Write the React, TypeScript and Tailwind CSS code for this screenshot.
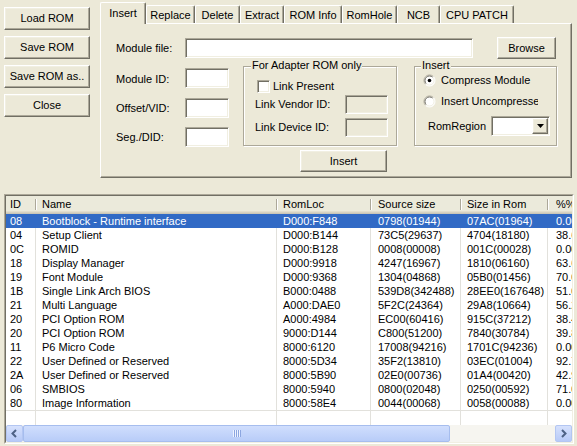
import React from "react";

const raised =
  "border border-t-white border-l-white border-r-[#716f64] border-b-[#716f64] shadow-[inset_-1px_-1px_0_#aca899,inset_1px_1px_0_#f1efe2]";
const sunken =
  "border border-t-[#aca899] border-l-[#aca899] border-r-white border-b-white shadow-[inset_1px_1px_0_#716f64,inset_-1px_-1px_0_#f1efe2]";
const etched =
  "border border-[#aca899] shadow-[inset_1px_1px_0_#ffffff,1px_1px_0_#ffffff]";

function Btn({ children, className = "" }: { children: React.ReactNode; className?: string }) {
  return (
    <div className={`${raised} bg-[#ece9d8] flex items-center justify-center whitespace-nowrap ${className}`}>
      {children}
    </div>
  );
}

function Radio({ checked }: { checked?: boolean }) {
  return (
    <svg width="13" height="13" viewBox="0 0 13 13" className="shrink-0">
      <circle cx="6.5" cy="6.5" r="5.5" fill="#ffffff" />
      <path d="M2.6 10.4 A5.5 5.5 0 0 1 10.4 2.6" stroke="#aca899" strokeWidth="1" fill="none" />
      <path d="M10.4 2.6 A5.5 5.5 0 0 1 2.6 10.4" stroke="#ffffff" strokeWidth="1" fill="none" />
      <path d="M3.3 9.7 A4.5 4.5 0 0 1 9.7 3.3" stroke="#716f64" strokeWidth="1" fill="none" />
      <path d="M9.7 3.3 A4.5 4.5 0 0 1 3.3 9.7" stroke="#f1efe2" strokeWidth="1" fill="none" />
      {checked && <circle cx="6.5" cy="6.5" r="1.8" fill="#000000" />}
    </svg>
  );
}

const tabs: [string, number][] = [
  ["Insert", 46],
  ["Replace", 49],
  ["Delete", 45],
  ["Extract", 44],
  ["ROM Info", 58],
  ["RomHole", 55],
  ["NCB", 43],
  ["CPU PATCH", 74],
];

const rows: string[][] = [
  ["08", "Bootblock - Runtime interface", "D000:F848", "0798(01944)", "07AC(01964)", "0.00"],
  ["04", "Setup Client", "D000:B144", "73C5(29637)", "4704(18180)", "38.66"],
  ["0C", "ROMID", "D000:B128", "0008(00008)", "001C(00028)", "0.00"],
  ["18", "Display Manager", "D000:9918", "4247(16967)", "1810(06160)", "63.69"],
  ["19", "Font Module", "D000:9368", "1304(04868)", "05B0(01456)", "70.09"],
  ["1B", "Single Link Arch BIOS", "B000:0488", "539D8(342488)", "28EE0(167648)", "51.05"],
  ["21", "Multi Language", "A000:DAE0", "5F2C(24364)", "29A8(10664)", "56.23"],
  ["20", "PCI Option ROM", "A000:4984", "EC00(60416)", "915C(37212)", "38.41"],
  ["20", "PCI Option ROM", "9000:D144", "C800(51200)", "7840(30784)", "39.88"],
  ["11", "P6 Micro Code", "8000:6120", "17008(94216)", "1701C(94236)", "0.00"],
  ["22", "User Defined or Reserved", "8000:5D34", "35F2(13810)", "03EC(01004)", "92.73"],
  ["2A", "User Defined or Reserved", "8000:5B90", "02E0(00736)", "01A4(00420)", "42.93"],
  ["06", "SMBIOS", "8000:5940", "0800(02048)", "0250(00592)", "71.09"],
  ["80", "Image Information", "8000:58E4", "0044(00068)", "0058(00088)", "0.00"],
];

const headers = ["ID", "Name", "RomLoc", "Source size", "Size in Rom", "%%"];
const cols = "grid grid-cols-[30px_241px_94px_90px_87px_80px]";
const pads = ["pl-[4px]", "pl-[6px]", "pl-[6px]", "pl-[7px]", "pl-[6px]", "pl-[8px]"];

function Chevron({ dir }: { dir: "l" | "r" }) {
  return (
    <svg width="9" height="9" viewBox="0 0 9 9">
      <path
        d={dir === "l" ? "M6 1 L2.5 4.5 L6 8" : "M3 1 L6.5 4.5 L3 8"}
        stroke="#4d6185"
        strokeWidth="2"
        fill="none"
      />
    </svg>
  );
}

export default function App() {
  return (
    <div className="w-[577px] h-[446px] bg-[#ece9d8] overflow-hidden font-['Liberation_Sans',Arial,sans-serif] text-[11px] leading-[13px] text-black">
      <div className="flex h-[194px]">
        {/* left buttons */}
        <div className="w-[100px] pl-[4px] pt-[7px] flex flex-col gap-[6px]">
          <Btn className="w-[86px] h-[23px]">Load ROM</Btn>
          <Btn className="w-[86px] h-[23px]">Save ROM</Btn>
          <Btn className="w-[86px] h-[23px]">Save ROM as..</Btn>
          <Btn className="w-[86px] h-[23px]">Close</Btn>
        </div>

        {/* tab control */}
        <div className="pt-[2px] flex flex-col">
          <div className="flex items-end h-[22px] -mb-px relative z-10">
            {tabs.map(([t, w], i) =>
              i === 0 ? (
                <div
                  key={t}
                  style={{ width: w }}
                  className="h-[22px] bg-[#ece9d8] border-l border-t border-l-white border-t-white border-r border-r-[#716f64] shadow-[inset_-1px_0_0_#aca899] rounded-t-[2px] flex items-start justify-center pt-[4px]"
                >
                  {t}
                </div>
              ) : (
                <div
                  key={t}
                  style={{ width: w }}
                  className="h-[18px] mb-px border-l border-t border-l-white border-t-white border-r border-r-[#716f64] shadow-[inset_-1px_0_0_#aca899] rounded-t-[2px] flex items-center justify-center pt-[2px]"
                >
                  {t}
                </div>
              )
            )}
          </div>
          <div className="w-[472px] h-[155px] border border-t-white border-l-white border-r-[#716f64] border-b-[#716f64] shadow-[inset_-1px_-1px_0_#aca899] pl-[15px] pt-[13px]">
            <div className="flex items-center h-[22px]">
              <div className="w-[69px]">Module file:</div>
              <div className={`${sunken} bg-white w-[288px] h-[20px]`} />
              <Btn className="ml-[24px] w-[59px] h-[22px]">Browse</Btn>
            </div>
            <div className="flex items-start">
              <div className="flex flex-col w-[113px]">
                <div className="flex items-center h-[20px] mt-[9px]">
                  <div className="w-[69px] pt-[3px]">Module ID:</div>
                  <div className={`${sunken} bg-white w-[44px] h-[20px]`} />
                </div>
                <div className="flex items-center h-[20px] mt-[10px]">
                  <div className="w-[69px] pt-[1px]">Offset/VID:</div>
                  <div className={`${sunken} bg-white w-[44px] h-[20px]`} />
                </div>
                <div className="flex items-center h-[20px] mt-[9px]">
                  <div className="w-[69px]">Seg./DID:</div>
                  <div className={`${sunken} bg-white w-[44px] h-[20px]`} />
                </div>
              </div>

              <div className={`${etched} relative ml-[14px] mt-[7px] w-[154px] h-[80px] pl-[11px] pt-[13px]`}>
                <span className="absolute left-[7px] -top-[8px] bg-[#ece9d8] px-[1px] whitespace-nowrap">
                  For Adapter ROM only
                </span>
                <div className="flex items-center h-[13px]">
                  <span className={`${sunken} bg-white w-[13px] h-[13px] ml-[2px]`} />
                  <span className="ml-[3px]">Link Present</span>
                </div>
                <div className="flex items-center h-[19px] mt-[2px]">
                  <div className="w-[90px]">Link Vendor ID:</div>
                  <div className={`${sunken} w-[43px] h-[19px]`} />
                </div>
                <div className="flex items-center h-[19px] mt-[4px]">
                  <div className="w-[90px]">Link Device ID:</div>
                  <div className={`${sunken} w-[43px] h-[19px]`} />
                </div>
              </div>

              <div className={`${etched} relative ml-[17px] mt-[7px] w-[143px] h-[80px] pl-[8px] pt-[7px]`}>
                <span className="absolute left-[6px] -top-[8px] bg-[#ece9d8] px-[1px]">Insert</span>
                <div className="flex items-center h-[13px]">
                  <Radio checked />
                  <span className="ml-[5px] whitespace-nowrap">Compress Module</span>
                </div>
                <div className="flex items-center h-[13px] mt-[8px]">
                  <Radio />
                  <span className="ml-[5px] w-[97px] overflow-hidden whitespace-nowrap">Insert Uncompressed</span>
                </div>
                <div className="flex items-center h-[20px] mt-[8px]">
                  <span className="ml-[5px] w-[63px]">RomRegion</span>
                  <div className={`${sunken} bg-white w-[59px] h-[20px] flex justify-end items-center pr-[1px]`}>
                    <div className={`${raised} bg-[#ece9d8] w-[16px] h-[16px] flex items-center justify-center`}>
                      <svg width="7" height="4" viewBox="0 0 7 4">
                        <polygon points="0,0 7,0 3.5,4" fill="#000000" />
                      </svg>
                    </div>
                  </div>
                </div>
              </div>
            </div>
            <Btn className="ml-[184px] mt-[3px] w-[87px] h-[22px]">Insert</Btn>
          </div>
        </div>
      </div>

      {/* list view */}
      <div className="ml-[4px] w-[570px] h-[250px] border border-t-[#aca899] border-l-[#aca899] border-r-white border-b-white">
        <div className="h-full border border-t-[#716f64] border-l-[#716f64] border-r-[#f1efe2] border-b-[#f1efe2] bg-white flex flex-col overflow-hidden">
          <div className={`${cols} h-[18px] shrink-0 bg-[#ebeadb] shadow-[inset_0_-1px_0_#cbc7b8,inset_0_-2px_0_#d6d2c2,inset_0_-3px_0_#e2decd]`}>
            {headers.map((h, i) => (
              <div key={h} className={`relative flex items-center pb-[2px] whitespace-nowrap ${pads[i]}`}>
                {h}
                <span className="absolute right-0 top-[3px] bottom-[4px] w-px bg-[#aca899] shadow-[1px_0_0_#ffffff]" />
              </div>
            ))}
          </div>
          {rows.map((r, ri) => {
            const sel = ri === 0;
            return (
              <div key={ri} className={`${cols} h-[14px] shrink-0 ${sel ? "bg-[#316ac5] text-white" : ""}`}>
                {r.map((c, ci) => (
                  <div
                    key={ci}
                    className={`${pads[ci]} leading-[14px] whitespace-nowrap overflow-hidden border-r ${sel ? "border-r-[#316ac5]" : "border-r-[#e2e1dc]"}`}
                  >
                    {c}
                  </div>
                ))}
              </div>
            );
          })}
          <div className={`${cols} flex-1 border-t border-t-[#e2e1dc]`}>
            {headers.map((h) => (
              <div key={h} className="border-r border-r-[#e2e1dc]" />
            ))}
          </div>
          <div className="flex h-[17px] shrink-0 bg-[#f6f5f0]">
            <div className="w-[17px] rounded-[2px] border border-[#b3c6f2] bg-linear-to-b from-[#d6e1fd] to-[#b7caf7] flex items-center justify-center">
              <Chevron dir="l" />
            </div>
            <div className="w-[427px] rounded-[2px] border border-[#a6bdee] bg-linear-to-b from-[#d0defd] to-[#b8ccf8] flex items-center justify-center">
              <svg width="8" height="7" viewBox="0 0 8 7">
                <path d="M0.5 0 V7 M2.5 0 V7 M4.5 0 V7 M6.5 0 V7" stroke="#eef3ff" strokeWidth="1" />
                <path d="M1.5 0 V7 M3.5 0 V7 M5.5 0 V7 M7.5 0 V7" stroke="#8ca6e0" strokeWidth="1" />
              </svg>
            </div>
            <div className="flex-1" />
            <div className="w-[17px] rounded-[2px] border border-[#b3c6f2] bg-linear-to-b from-[#d6e1fd] to-[#b7caf7] flex items-center justify-center">
              <Chevron dir="r" />
            </div>
          </div>
        </div>
      </div>
    </div>
  );
}
